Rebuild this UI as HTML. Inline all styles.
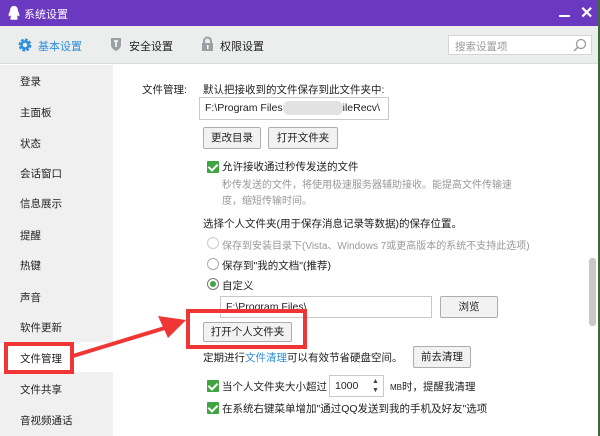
<!DOCTYPE html>
<html><head><meta charset="utf-8"><style>
*{margin:0;padding:0;box-sizing:border-box}
body{width:600px;height:436px;overflow:hidden;background:#3a6a3a;font-family:"Liberation Sans","Noto Sans CJK SC",sans-serif;font-size:10.5px;color:#222;position:relative}
.a{position:absolute;white-space:nowrap}
.win{position:absolute;left:0;top:0;width:598px;height:436px;background:#fff}
.title{left:0;top:0;width:598px;height:26px;background:#6b38c0;color:#fff}
.tool{left:0;top:26px;width:598px;height:38px;background:#eceded;border-bottom:1px solid #dcdcdc}
.side{left:0;top:65px;width:113px;height:371px;background:#f0f0f0}
.si{position:absolute;left:20px;font-size:10.5px;color:#222;white-space:nowrap}
.btn{position:absolute;border:1px solid #adadad;background:#f2f2f2;border-radius:2px;text-align:center;font-size:10.5px;color:#222;white-space:nowrap}
.inp{position:absolute;border:1px solid #c8c8c8;background:#fff;font-size:10.5px;padding-left:5px;white-space:nowrap;overflow:hidden}
.cb{position:absolute;width:12px;height:12px;background:#3fa542;border-radius:1px}
.cb:after{content:"";position:absolute;left:3px;top:1px;width:4px;height:7px;border:solid #fff;border-width:0 2px 2px 0;transform:rotate(45deg)}
.rd{position:absolute;width:12px;height:12px;border:1px solid #aaa;border-radius:50%;background:#fff}
.red{position:absolute;border:4px solid #f03535}
</style></head><body>
<div class="win">
<div class="a title">
 <svg class="a" style="left:7px;top:5px" width="14" height="16" viewBox="0 0 14 16"><path d="M7 1C4 1 3 3.5 3 6C2 8 1 10 2 11.5C3 11 3 10.5 3.5 10.5C4 12 4 13 3 14C4 15 6 15 7 14.5C8 15 10 15 11 14C10 13 10 12 10.5 10.5C11 10.5 11 11 12 11.5C13 10 12 8 11 6C11 3.5 10 1 7 1Z" fill="#fff"/></svg>
 <div class="a" style="left:24px;top:6px;font-size:11px">系统设置</div>
 <div class="a" style="left:559px;top:15px;width:11px;height:2px;background:#fff"></div>
 <div class="a" style="left:580px;top:3px;font-size:16px;font-weight:bold">✕</div>
</div>
<div class="a tool">
 <svg class="a" style="left:18px;top:12px" width="14" height="14" viewBox="0 0 14 14"><circle cx="7" cy="7" r="5" fill="none" stroke="#2f8fdc" stroke-width="3" stroke-dasharray="2.5 1.4"/><circle cx="7" cy="7" r="3.5" fill="none" stroke="#2f8fdc" stroke-width="2.5"/></svg>
 <div class="a" style="left:38px;top:12px;font-size:11px;color:#2f8fdc">基本设置</div>
 <svg class="a" style="left:110px;top:11px" width="12" height="15" viewBox="0 0 12 15"><path d="M1 1H11V8C11 11 8 13 6 14C4 13 1 11 1 8Z" fill="#9aa0a4"/><path d="M4 4H8M6 4V10" stroke="#fff" stroke-width="1.5"/></svg>
 <div class="a" style="left:129px;top:12px;font-size:11px">安全设置</div>
 <svg class="a" style="left:201px;top:10px" width="13" height="16" viewBox="0 0 13 16"><path d="M3 7V5A3.5 3.5 0 0 1 10 5V7" fill="none" stroke="#9aa0a4" stroke-width="2"/><rect x="1" y="7" width="11" height="8" fill="#9aa0a4"/><rect x="6" y="9" width="1.5" height="4" fill="#fff"/></svg>
 <div class="a" style="left:220px;top:12px;font-size:11px">权限设置</div>
 <div class="a" style="left:448px;top:9px;width:144px;height:20px;background:#fff;border:1px solid #d5d5d5"><span class="a" style="left:6px;top:3px;color:#999;font-size:10.5px">搜索设置项</span>
  <svg class="a" style="left:124px;top:2px" width="14" height="14" viewBox="0 0 14 14"><circle cx="8" cy="6" r="4.5" fill="none" stroke="#999" stroke-width="1.3"/><path d="M5 9L1 13" stroke="#999" stroke-width="1.5"/></svg></div>
</div>
<div class="a side">
 <div class="si" style="top:9px">登录</div>
 <div class="si" style="top:40px">主面板</div>
 <div class="si" style="top:71px">状态</div>
 <div class="si" style="top:101px">会话窗口</div>
 <div class="si" style="top:131px">信息展示</div>
 <div class="si" style="top:163px">提醒</div>
 <div class="si" style="top:193px">热键</div>
 <div class="si" style="top:225px">声音</div>
 <div class="si" style="top:255px">软件更新</div>
 <div class="a" style="left:0;top:277px;width:113px;height:30px;background:#fff"></div>
 <div class="si" style="top:286px">文件管理</div>
 <div class="si" style="top:317px">文件共享</div>
 <div class="si" style="top:348px">音视频通话</div>
</div>
<div class="a" style="left:142px;top:82px">文件管理:</div>
<div class="a" style="left:203px;top:82px">默认把接收到的文件保存到此文件夹中:</div>
<div class="inp" style="left:199px;top:97px;width:190px;height:23px;line-height:21px">F:\Program Files<span style="display:inline-block;width:60px;height:14px;background:#e2e2e2;vertical-align:middle;border-radius:6px"></span>ileRecv\</div>
<div class="btn" style="left:203px;top:127px;width:58px;height:22px;line-height:20px">更改目录</div>
<div class="btn" style="left:268px;top:127px;width:70px;height:22px;line-height:20px">打开文件夹</div>
<div class="cb" style="left:207px;top:161px"></div>
<div class="a" style="left:222px;top:159px">允许接收通过秒传发送的文件</div>
<div class="a" style="left:222px;top:178px;color:#999;width:300px;line-height:16px;font-size:10px;white-space:normal">秒传发送的文件，将使用极速服务器辅助接收。能提高文件传输速度，缩短传输时间。</div>
<div class="a" style="left:203px;top:216px">选择个人文件夹(用于保存消息记录等数据)的保存位置。</div>
<div class="rd" style="left:207px;top:237px;border-color:#ccc"></div>
<div class="a" style="left:222px;top:237px;color:#999;font-size:10px">保存到安装目录下(Vista、Windows 7或更高版本的系统不支持此选项)</div>
<div class="rd" style="left:207px;top:258px"></div>
<div class="a" style="left:222px;top:258px">保存到"我的文档"(推荐)</div>
<div class="rd" style="left:207px;top:278px;border-color:#777"><div class="a" style="left:2px;top:2px;width:6px;height:6px;border-radius:50%;background:#3fa542"></div></div>
<div class="a" style="left:222px;top:278px">自定义</div>
<div class="inp" style="left:220px;top:296px;width:212px;height:22px;line-height:20px">F:\Program Files\</div>
<div class="btn" style="left:440px;top:296px;width:58px;height:22px;line-height:20px">浏览</div>
<div class="btn" style="left:203px;top:322px;width:89px;height:20px;line-height:18px">打开个人文件夹</div>
<div class="a" style="left:203px;top:350px">定期进行<span style="color:#2f8fdc">文件清理</span>可以有效节省硬盘空间。</div>
<div class="btn" style="left:413px;top:346px;width:58px;height:22px;line-height:20px">前去清理</div>
<div class="cb" style="left:207px;top:380px"></div>
<div class="a" style="left:222px;top:379px">当个人文件夹大小超过</div>
<div class="inp" style="left:329px;top:375px;width:55px;height:22px;line-height:20px">1000<span class="a" style="left:42px;top:1px;font-size:7px;line-height:9px;color:#444">▲<br>▼</span></div>
<div class="a" style="left:390px;top:379px"><span style="font-size:8px">MB</span>时，提醒我清理</div>
<div class="cb" style="left:207px;top:402px"></div>
<div class="a" style="left:222px;top:401px">在系统右键菜单增加"通过QQ发送到我的手机及好友"选项</div>
<div class="a" style="left:589px;top:258px;width:7px;height:68px;background:#c8c8c8;border-radius:3px"></div>
<div class="red" style="left:4px;top:342px;width:70px;height:32px"></div>
<div class="red" style="left:186px;top:309px;width:121px;height:40px"></div>
<svg class="a" style="left:0;top:0" width="600" height="436"><path d="M73 356L168 327" stroke="#f03535" stroke-width="4"/><path d="M186 320L158 316L168 338Z" fill="#f03535"/></svg>
</div>
</body></html>
